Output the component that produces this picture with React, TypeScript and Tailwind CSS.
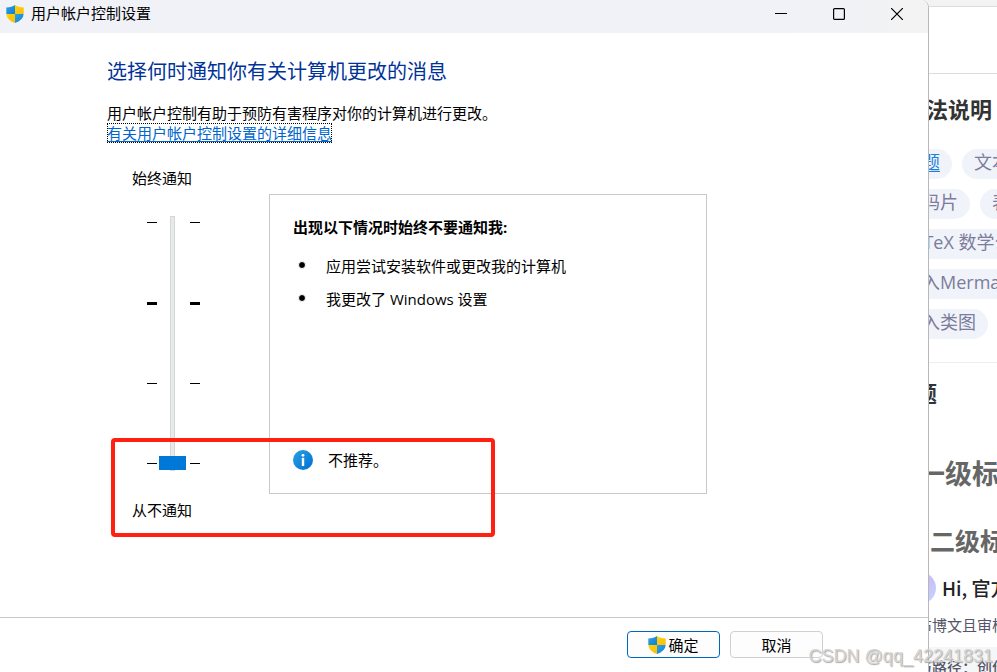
import { useState } from "react"

const tagRows = [
  ["标题", "文本样式"],
  ["代码片", "表格"],
  ["LaTeX 数学公式"],
  ["插入Mermaid流程图"],
  ["插入类图"],
]

function ShieldIcon({ className = "" }: { className?: string }) {
  return (
    <svg className={className} viewBox="0 0 18 18" aria-hidden="true">
      <defs>
        <clipPath id="shield">
          <path d="M9 0C7 1.5 4 2.3 0.3 2.4V8c0 5 3.500 8.200 8.700 10 5.200-1.800 8.700-5 8.700-10V2.400C14 2.300 11 1.500 9 0Z" />
        </clipPath>
        <linearGradient id="shieldBlue" x1="0" y1="0" x2="1" y2="1">
          <stop offset="0" stopColor="#2ea3e6" />
          <stop offset="1" stopColor="#0f7fd4" />
        </linearGradient>
        <linearGradient id="shieldGold" x1="0" y1="0" x2="1" y2="1">
          <stop offset="0" stopColor="#ffd500" />
          <stop offset="1" stopColor="#fdb913" />
        </linearGradient>
      </defs>
      <g clipPath="url(#shield)">
        <rect width="9" height="9" fill="url(#shieldBlue)" />
        <rect x="9" width="9" height="9" fill="url(#shieldGold)" />
        <rect y="9" width="9" height="9" fill="url(#shieldGold)" />
        <rect x="9" y="9" width="9" height="9" fill="url(#shieldBlue)" />
      </g>
    </svg>
  )
}

function InfoIcon() {
  return (
    <svg className="size-5 shrink-0" viewBox="0 0 20 20" aria-hidden="true">
      <defs>
        <linearGradient id="info" x1="0" y1="0" x2="1" y2="1">
          <stop offset="0" stopColor="#2aa0e4" />
          <stop offset="1" stopColor="#0070d0" />
        </linearGradient>
      </defs>
      <circle cx="10" cy="10" r="10" fill="url(#info)" />
      <circle cx="10" cy="5.300" r="1.400" fill="#fff" />
      <rect x="8.800" y="7.800" width="2.400" height="8.200" fill="#fff" />
    </svg>
  )
}

function TitleBar() {
  return (
    <header className="flex h-[33px] shrink-0 items-center bg-linear-to-r from-[#f0f2f7] from-85% to-[#f3f3f3] pb-[5px] pl-1.5">
      <ShieldIcon className="size-[18px]" />
      <h1 className="ml-[7px] flex-1 pb-[3px] text-[15px] leading-5">用户帐户控制设置</h1>
      <div className="flex pr-0.5">
        <button type="button" aria-label="最小化" className="flex h-7 w-[58px] items-center justify-center">
          <svg className="size-3" viewBox="0 0 12 12" stroke="#000">
            <path d="M0 5.500H12" />
          </svg>
        </button>
        <button type="button" aria-label="最大化" className="flex h-7 w-[58px] items-center justify-center">
          <svg className="size-3" viewBox="0 0 12 12" fill="none" stroke="#000" strokeWidth="1.200">
            <rect x="0.600" y="0.600" width="10.800" height="10.800" rx="1" />
          </svg>
        </button>
        <button type="button" aria-label="关闭" className="flex h-7 w-[58px] items-center justify-center">
          <svg className="size-3" viewBox="0 0 12 12" stroke="#000" strokeWidth="1.200">
            <path d="M0 0L12 12M12 0L0 12" />
          </svg>
        </button>
      </div>
    </header>
  )
}

// 默认级别的刻度更粗
function Ticks() {
  return (
    <div className="mt-1.5 flex h-[242px] w-2.5 flex-col justify-between">
      <i className="h-px bg-black" />
      <i className="h-[3px] bg-black" />
      <i className="h-px bg-black" />
      <i className="h-px bg-black" />
    </div>
  )
}

function LevelSlider() {
  const [level, setLevel] = useState(0)

  return (
    <div className="w-[162px] shrink-0 pl-[25px]">
      <label htmlFor="level" className="block text-[15px] leading-5">
        始终通知
      </label>
      <div className="mt-7 flex pl-[15px]">
        <Ticks />
        <input
          id="level"
          type="range"
          min={0}
          max={3}
          value={level}
          onChange={(e) => setLevel(Number(e.target.value))}
          className="mr-1 ml-0.5 h-[255px] w-[27px] appearance-none bg-transparent [direction:rtl] [writing-mode:vertical-lr] [&::-webkit-slider-runnable-track]:h-full [&::-webkit-slider-runnable-track]:w-[5px] [&::-webkit-slider-runnable-track]:border [&::-webkit-slider-runnable-track]:border-[#d6d6d6] [&::-webkit-slider-runnable-track]:bg-[#e7eaea] [&::-webkit-slider-thumb]:-ml-3 [&::-webkit-slider-thumb]:h-3.5 [&::-webkit-slider-thumb]:w-[27px] [&::-webkit-slider-thumb]:appearance-none [&::-webkit-slider-thumb]:bg-[#0078d7]"
        />
        <Ticks />
      </div>
      <p className="mt-[29px] text-[15px] leading-5">从不通知</p>
    </div>
  )
}

function SettingsWindow() {
  return (
    <main className="relative flex min-w-0 flex-1 flex-col overflow-hidden rounded-tr-lg border-r border-[#b8b8b8] bg-white text-black">
      <TitleBar />
      <div className="flex-1 pt-6 pl-[107px]">
        <h2 className="text-xl leading-[30px] text-[#003399]">选择何时通知你有关计算机更改的消息</h2>
        <p className="mt-4 text-[15px] leading-5">用户帐户控制有助于预防有害程序对你的计算机进行更改。</p>
        <a
          href="#details"
          className="block w-fit text-[15px] leading-5 text-[#0066cc] underline underline-offset-2 outline outline-dotted -outline-offset-1 outline-black"
        >
          有关用户帐户控制设置的详细信息
        </a>
        <div className="mt-[25px] flex items-start">
          <LevelSlider />
          <section className="mt-[26px] mr-[221px] flex h-[300px] min-w-0 flex-1 flex-col border border-[#c8c8c8] px-[23px] pt-[22px] pb-[23px] text-[15px] leading-5">
            <h3 className="font-bold">出现以下情况时始终不要通知我:</h3>
            <ul className="mt-[19px] flex flex-col gap-[13px] pl-[5px]">
              <li className="flex items-center gap-5">
                <i className="mb-0.5 size-2 rounded-full border border-white bg-black" />
                应用尝试安装软件或更改我的计算机
              </li>
              <li className="flex items-center gap-5">
                <i className="mb-0.5 size-2 rounded-full border border-white bg-black" />
                我更改了 Windows 设置
              </li>
            </ul>
            <p className="mt-auto flex items-center gap-[15px]">
              <InfoIcon />
              不推荐。
            </p>
          </section>
        </div>
      </div>
      <footer className="flex h-[55px] shrink-0 items-start justify-end gap-2.5 border-t border-[#c8c8c8] pt-[13px] pr-[105px] text-[15px] leading-5">
        <button
          type="button"
          className="flex h-[27px] w-[93px] items-center justify-center gap-0.5 rounded border border-[#0067c0] bg-[#fdfdfd]"
        >
          <ShieldIcon className="size-[18px]" />
          确定
        </button>
        <button type="button" className="h-[27px] w-[93px] rounded border border-[#d0d0d0] bg-[#fdfdfd]">
          取消
        </button>
      </footer>
      {/* 红色标注框 */}
      <div className="pointer-events-none absolute top-[438px] left-[111px] h-[99px] w-[384px] rounded border-4 border-[#ff2012]" />
    </main>
  )
}

// 窗口后面露出的编辑器帮助栏
function HelpPanel() {
  return (
    <aside className="w-[68px] shrink-0 overflow-hidden whitespace-nowrap bg-white">
      <div className="h-[7px] border-b border-[#dcdcdc] bg-[#f3f3f3]" />
      <div className="h-[67px] border-b border-[#dddddd]" />
      <div className="-ml-[37px] w-[300px]">
        <h2 className="pt-[19px] pl-3 text-[22px] leading-8 font-bold text-[#333333]">语法说明</h2>
        <div className="mt-6 flex flex-col gap-2.5">
          {tagRows.map((row) => (
            <div key={row[0]} className="flex gap-2.5">
              {row.map((tag) => (
                <a
                  key={tag}
                  href="#syntax"
                  className={
                    tag === "标题"
                      ? "h-[30px] rounded-full bg-[#f0f3f9] px-3 text-lg leading-[26px] text-[#1e80d8] underline underline-offset-2"
                      : "h-[30px] rounded-full bg-[#f0f3f9] px-3 text-lg leading-[26px] text-[#7c7c9c]"
                  }
                >
                  {tag}
                </a>
              ))}
            </div>
          ))}
        </div>
        <div className="mt-[23px] border-t border-[#eeeeee]" />
        <h3 className="mt-3.5 pl-px text-[22px] leading-8 font-bold text-[#333333]">标题</h3>
        <div className="h-36 overflow-hidden pt-11 pl-[26px] font-bold text-[#666666]">
          <p className="text-[27px] leading-[42px]">一级标题</p>
          <p className="mt-7 pl-3 text-[25px] leading-9">二级标题</p>
        </div>
        <div className="mt-4 flex items-center gap-1.5 pl-3 text-[#222222]">
          <span className="size-8 rounded-full bg-linear-to-br from-[#c9a5f5] to-[#c5d5ff]" />
          <span className="font-['Noto_Sans_CJK_SC',sans-serif] text-[19px] leading-[38px] font-medium">Hi, 官方助手</span>
        </div>
        <p className="mt-1.5 pl-[25px] text-[15px] leading-6 text-[#555566]">布博文且审核通过</p>
        <p className="mt-2.5 bg-[#f5f6f8] pt-2 pl-[25px] text-[15px] leading-6 font-medium text-[#555566]">
          与路径：创作中心
        </p>
      </div>
    </aside>
  )
}

export default function App() {
  return (
    <div className="relative flex h-screen overflow-hidden bg-[#f3f3f3] font-['Open_Sans','Noto_Sans_CJK_SC',sans-serif]">
      <SettingsWindow />
      <HelpPanel />
      <span className="pointer-events-none absolute right-1 bottom-1 font-['Liberation_Sans',sans-serif] text-lg leading-6 text-[#d4d4d4] [text-shadow:1px_1px_1px_#a8a8a8]">
        CSDN @qq_42241831
      </span>
    </div>
  )
}
